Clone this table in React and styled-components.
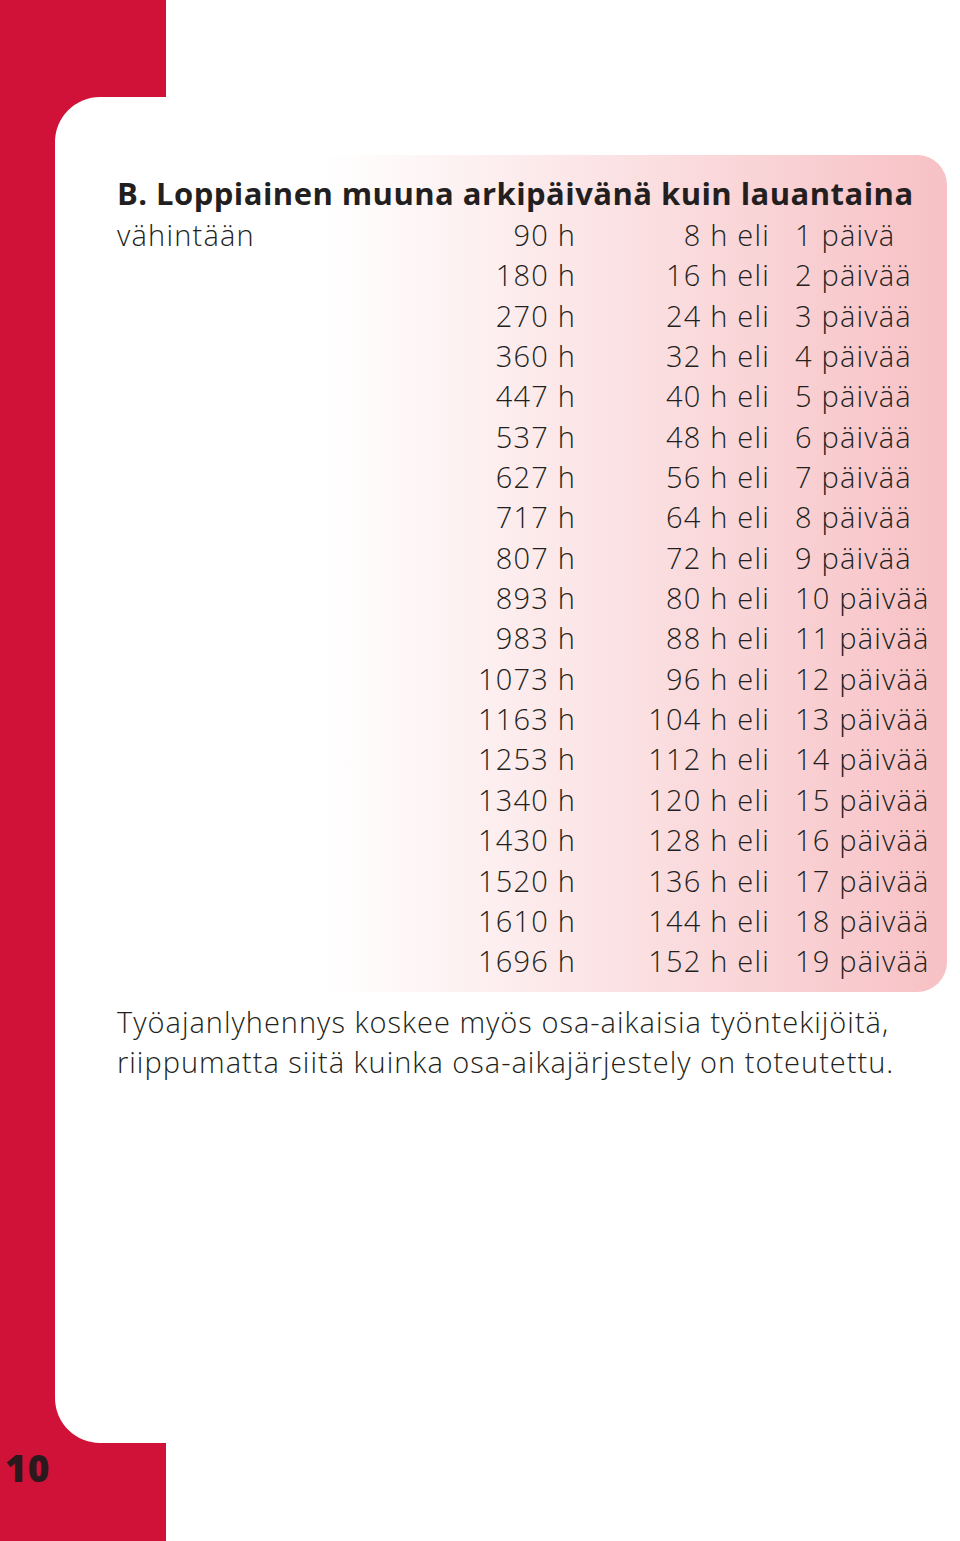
import React from 'react';
import styled, { createGlobalStyle } from 'styled-components';

const Global = createGlobalStyle`
  html, body { margin: 0; padding: 0; background: #fff; }
  body { font-family: "Open Sans", "Liberation Sans", sans-serif; color: #231f20; }
`;

const Page = styled.div`
  width: 960px;
  height: 1541px;
  display: grid;
  grid-template-columns: 55px 111px 1fr;
  grid-template-rows: 97px 1fr 98px;
  background: #fff;
  overflow: hidden;
`;

const RedBand = styled.div`
  grid-column: 1 / 3;
  grid-row: 1 / 4;
  background: #d01238;
`;

const Card = styled.div`
  grid-column: 2 / 4;
  grid-row: 2;
  background: #fff;
  border-radius: 45px 0 0 45px;
  padding: 58px 13px 0 62px;
  z-index: 1;
`;

const PageNumber = styled.div`
  grid-column: 1 / 3;
  grid-row: 3;
  z-index: 2;
  padding: 5px 0 0 5px;
  font-family: "Open Sans", "Liberation Sans", sans-serif;
  font-weight: 800;
  font-size: 37px;
  line-height: 40px;
  color: #2a1a1e;
  letter-spacing: 1px;
`;

const Panel = styled.div`
  background: linear-gradient(to right, #fff 0, #fff 25%, #f7c1c5 100%);
  border-radius: 0 30px 30px 0;
  padding: 18px 0 10px 0;
`;

const Title = styled.div`
  font-weight: 700;
  font-size: 31px;
  line-height: 40px;
  letter-spacing: 0.45px;
  white-space: nowrap;
  margin-bottom: 2px;
`;

const Table = styled.div`
  display: grid;
  grid-template-columns: 343px 116px 194px 1fr;
  font-weight: 300;
  font-size: 29px;
  line-height: 40.35px;
  letter-spacing: 1.2px;
  white-space: nowrap;
`;

const Cell = styled.div`
  text-align: ${p => (p.right ? 'right' : 'left')};
  padding-left: ${p => p.pad || 0}px;
`;

const Note = styled.p`
  margin: 10px 0 0 0;
  font-weight: 300;
  font-size: 29px;
  line-height: 40px;
  letter-spacing: 1px;
`;

const rows = [
  [90, 8, '1 päivä'],
  [180, 16, '2 päivää'],
  [270, 24, '3 päivää'],
  [360, 32, '4 päivää'],
  [447, 40, '5 päivää'],
  [537, 48, '6 päivää'],
  [627, 56, '7 päivää'],
  [717, 64, '8 päivää'],
  [807, 72, '9 päivää'],
  [893, 80, '10 päivää'],
  [983, 88, '11 päivää'],
  [1073, 96, '12 päivää'],
  [1163, 104, '13 päivää'],
  [1253, 112, '14 päivää'],
  [1340, 120, '15 päivää'],
  [1430, 128, '16 päivää'],
  [1520, 136, '17 päivää'],
  [1610, 144, '18 päivää'],
  [1696, 152, '19 päivää'],
];

export default function App() {
  return (
    <Page>
      <Global />
      <RedBand />
      <Card>
        <Panel>
          <Title>B. Loppiainen muuna arkipäivänä kuin lauantaina</Title>
          <Table>
            {rows.map(([total, hours, days], i) => (
              <React.Fragment key={total}>
                <Cell>{i === 0 ? 'vähintään' : ''}</Cell>
                <Cell right>{total} h</Cell>
                <Cell right>{hours} h eli</Cell>
                <Cell pad={25}>{days}</Cell>
              </React.Fragment>
            ))}
          </Table>
        </Panel>
        <Note>
          Työajanlyhennys koskee myös osa-aikaisia työntekijöitä,
          <br />
          riippumatta siitä kuinka osa-aikajärjestely on toteutettu.
        </Note>
      </Card>
      <PageNumber>10</PageNumber>
    </Page>
  );
}
